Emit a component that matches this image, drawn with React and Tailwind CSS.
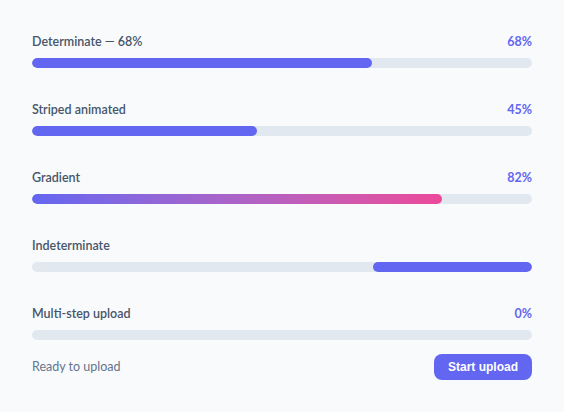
import React from "react";

function Row({ label, pct, children }) {
  return (
    <div className="flex flex-col">
      <div className="flex h-5 items-center justify-between">
        <span className="text-[12.5px] font-semibold text-[#475569]">{label}</span>
        {pct !== undefined && (
          <span className="text-[12.5px] font-bold text-[#6366f1]">{pct}</span>
        )}
      </div>
      <div className="mt-[6px]">{children}</div>
    </div>
  );
}

export default function App() {
  return (
    <div
      className="min-h-[412px] w-full bg-[#f8fafc] px-8 pt-[32px]"
      style={{ fontFamily: "Lato, 'Liberation Sans', sans-serif" }}
    >
      <div className="flex flex-col gap-[32px]">
        <Row label="Determinate — 68%" pct="68%">
          <div className="h-2.5 w-full overflow-hidden rounded-full bg-[#e2e8f0]">
            <div className="h-full rounded-full bg-[#6366f1]" style={{ width: "68%" }} />
          </div>
        </Row>
        <Row label="Striped animated" pct="45%">
          <div className="h-2.5 w-full overflow-hidden rounded-full bg-[#e2e8f0]">
            <div className="h-full rounded-full bg-[#6366f1]" style={{ width: "45%" }} />
          </div>
        </Row>
        <Row label="Gradient" pct="82%">
          <div className="h-2.5 w-full overflow-hidden rounded-full bg-[#e2e8f0]">
            <div
              className="h-full rounded-full bg-gradient-to-r from-[#6366f1] to-[#ec4899]"
              style={{ width: "82%" }}
            />
          </div>
        </Row>
        <Row label="Indeterminate">
          <div className="relative h-2.5 w-full overflow-hidden rounded-full bg-[#e2e8f0]">
            <div className="absolute top-0 left-[68.2%] h-full w-[31.8%] rounded-full bg-[#6366f1]" />
          </div>
        </Row>
        <Row label="Multi-step upload" pct="0%">
          <div className="h-2.5 w-full overflow-hidden rounded-full bg-[#e2e8f0]">
            <div className="h-full rounded-full bg-[#6366f1]" style={{ width: "0%" }} />
          </div>
        </Row>
      </div>
      <div className="mt-[14px] flex items-center justify-between">
        <span className="text-[12.5px] text-[#64748b]">Ready to upload</span>
        <button
          className="flex h-[26px] w-[98px] items-center justify-center rounded-lg bg-[#6366f1] text-[12px] font-bold text-white"
          style={{ fontFamily: "'Liberation Sans', Arial, sans-serif" }}
        >
          Start upload
        </button>
      </div>
    </div>
  );
}
